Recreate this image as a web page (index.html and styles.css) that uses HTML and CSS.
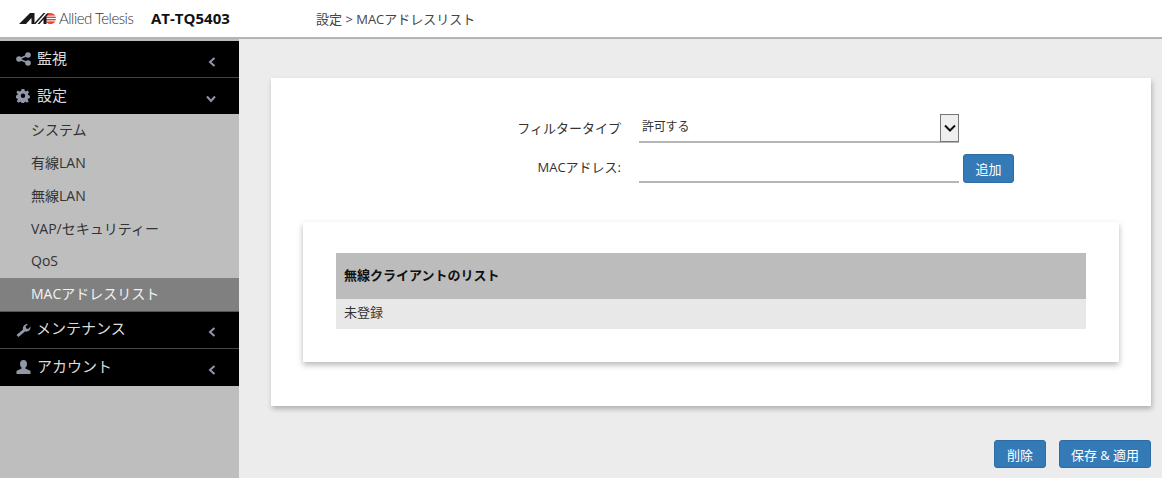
FILE: index.html
```html
<!DOCTYPE html>
<html>
<head>
  <meta charset="UTF-8">
  <link rel="stylesheet" href="styles.css">
</head>
<body>
  <div class="header">
    <div class="logo">
      <svg class="logo-mark" width="37" height="11" viewBox="0 0 37 11">
        <circle cx="31.500" cy="5.500" r="5.500" fill="#e8412c"/>
        <rect x="25" y="2.600" width="12" height="1" fill="#fff"/>
        <rect x="25" y="5" width="12" height="1" fill="#fff"/>
        <rect x="25" y="7.400" width="12" height="1" fill="#fff"/>
        <polygon points="0,11 11,0 15.500,0 15.500,11 12.500,11 12.500,5 7,11" fill="#1a1a1a"/>
        <polygon points="14.500,11 24.500,0 26.500,0 16.500,11" fill="#1a1a1a"/>
        <polygon points="18.500,11 28,0.500 30,0 27.500,3.500 27.500,11 24.500,11 24.500,6.500 20.500,11" fill="#1a1a1a"/>
      </svg>
      <span class="logo-text">Allied Telesis</span>
    </div>
    <div class="model">AT-TQ5403</div>
    <div class="crumb">設定 &gt; MACアドレスリスト</div>
  </div>
  <div class="main">
    <div class="sidebar">
      <div class="menu-item">
        <svg class="menu-icon" width="15" height="14" viewBox="0 0 15 14"><circle cx="3" cy="7" r="2.800"/><circle cx="12" cy="3" r="2.800"/><circle cx="12" cy="11" r="2.800"/><path d="M3 7 12 3M3 7l9 4" stroke="#8f97a8" stroke-width="1.500"/></svg>
        <span class="menu-label">監視</span>
        <svg class="chev" width="8" height="10" viewBox="0 0 8 10"><path d="M6.500 1 2 5l4.500 4"/></svg>
      </div>
      <div class="menu-item">
        <svg class="menu-icon" width="15" height="14" viewBox="0 0 15 14"><path d="M6 0h3l.4 2 1.300.6 1.800-1 1.600 2.200-1.400 1.400.2 1.300 2 .7v2.600l-2 .6-.3 1.300 1.200 1.500-2 1.700-1.500-1.200-1.200.4-.5 1.800H6l-.5-1.900-1.200-.4-1.600 1.200-2-1.700 1.200-1.500-.3-1.300-2-.6V7.200l2-.7.2-1.300L.4 3.800 2 1.600l1.800 1L5.600 2z" transform="scale(.93)"/><circle cx="7" cy="6.700" r="2.200" fill="#000"/></svg>
        <span class="menu-label">設定</span>
        <svg class="chev" width="10" height="8" viewBox="0 0 10 8"><path d="M1 1.500l4 4.500 4-4.500"/></svg>
      </div>
      <div class="sub-menu">
        <div class="sub-item">システム</div>
        <div class="sub-item">有線LAN</div>
        <div class="sub-item">無線LAN</div>
        <div class="sub-item">VAP/セキュリティー</div>
        <div class="sub-item">QoS</div>
        <div class="sub-item active">MACアドレスリスト</div>
      </div>
      <div class="menu-item">
        <svg class="menu-icon icon-tight" width="15" height="14" viewBox="0 0 15 14"><path d="M0.500 12 7 6.500C6.400 3.500 8.500.8 12 1L9.600 3.400 10.200 5.400 12.200 6 14.600 3.600C14.900 7 12 9.300 9 8.500L2.500 14Z"/></svg>
        <span class="menu-label">メンテナンス</span>
        <svg class="chev" width="8" height="10" viewBox="0 0 8 10"><path d="M6.500 1 2 5l4.500 4"/></svg>
      </div>
      <div class="menu-item">
        <svg class="menu-icon" width="15" height="14" viewBox="0 0 15 14"><path d="M7.500 0C10 0 11 2 11 4c0 2-1 3.200-1.800 4 0 1 3.300 1.500 5.300 3v3H.5v-3c2-1.500 5.300-2 5.300-3C5 7.200 4 6 4 4c0-2 1-4 3.500-4Z"/></svg>
        <span class="menu-label">アカウント</span>
        <svg class="chev" width="8" height="10" viewBox="0 0 8 10"><path d="M6.500 1 2 5l4.500 4"/></svg>
      </div>
    </div>
    <div class="content">
      <div class="card">
        <div class="form-row">
          <label class="form-label">フィルタータイプ</label>
          <div class="select-box">
            <span class="select-value">許可する</span>
            <span class="select-arrow">
              <svg width="12" height="8" viewBox="0 0 12 8"><path d="M1 1.500 6 6.500 11 1.500" fill="none" stroke="#111" stroke-width="2"/></svg>
            </span>
          </div>
        </div>
        <div class="form-row row-mac">
          <label class="form-label">MACアドレス:</label>
          <div class="text-input"></div>
          <button class="btn btn-add">追加</button>
        </div>
        <div class="list-card">
          <table class="client-table">
            <thead>
              <tr><th>無線クライアントのリスト</th></tr>
            </thead>
            <tbody>
              <tr><td>未登録</td></tr>
            </tbody>
          </table>
        </div>
      </div>
      <div class="actions">
        <button class="btn btn-delete">削除</button>
        <button class="btn btn-save">保存 &amp; 適用</button>
      </div>
    </div>
  </div>
</body>
</html>
```

FILE: styles.css
```css
* { box-sizing: border-box; }
html, body { height: 100%; }
body { margin: 0; overflow: hidden; background: #ececec; color: #333; font-family: "Open Sans", "Noto Sans CJK JP", sans-serif; font-size: 13px; }

.header { height: 39px; background: #fff; border-bottom: 2px solid #b5b5b5; display: flex; align-items: center; padding-left: 19px; padding-bottom: 1px; }
.logo { display: flex; align-items: center; width: 132px; }
.logo-mark { flex: none; }
.logo-text { margin-left: 3px; font-family: "Lato", sans-serif; font-weight: 300; font-size: 15px; letter-spacing: -.5px; color: #333; white-space: nowrap; }
.model { width: 165px; font-weight: 700; font-size: 15px; color: #111; }
.crumb { color: #444; font-size: 13px; }

.main { display: flex; height: 439px; }

.sidebar { width: 239px; flex: none; background: #bebebe; padding-top: 2px; }
.menu-item { height: 37px; background: #000; border-bottom: 1px solid #444; display: flex; align-items: center; padding: 0 23px 4px 16px; color: #dcdcdc; font-size: 15px; }
.menu-item:last-child { border-bottom: 0; }
.menu-icon { fill: #8f97a8; flex: none; margin: 4px 6px 0 0; }
.icon-tight { margin-right: 5px; }
.menu-label { flex: 1; }
.chev { flex: none; margin-top: 9px; }
.chev path { fill: none; stroke: #8f97a8; stroke-width: 2; }

.sub-menu { background: #bebebe; margin-top: -1px; }
.sub-item { height: 32.800px; display: flex; align-items: center; padding: 0 0 2px 31px; color: #333; font-size: 14px; }
.sub-item.active { background: #808080; color: #f2f2f2; border-bottom: 1px solid #555; height: 34px; padding-bottom: 3px; }

.content { flex: 1; padding: 39px 11px 0 32px; }
.card { height: 328px; background: #fff; box-shadow: 1px 3px 5px rgba(0, 0, 0, .25); padding: 36px 32px 0; }
.form-row { display: flex; align-items: flex-start; }
.form-label { width: 318px; padding-top: 4px; text-align: right; font-size: 13px; color: #333; flex: none; margin-right: 18px; }
.select-box { width: 320px; height: 29px; border-bottom: 2px solid #b5b5b5; display: flex; justify-content: space-between; padding: 3px 0 0 3px; font-size: 12px; }
.select-value { letter-spacing: -.2px; }
.select-arrow { width: 19px; height: 28px; margin-top: -3px; background: #efefef; border: 1px solid #767676; display: flex; align-items: center; justify-content: center; }
.row-mac { margin-top: 11px; }
.row-mac .form-label { padding-top: 3px; }
.text-input { width: 320px; height: 29px; border-bottom: 2px solid #b5b5b5; }

.btn { border: 1px solid #2e6da4; border-radius: 3px; background: #337ab7; color: #fff; font-family: inherit; font-size: 13px; padding: 0; height: 29px; }
.btn-add { width: 51px; margin-left: 4px; }

.list-card { margin-top: 39px; height: 140px; background: #fff; box-shadow: 0 3px 6px rgba(0, 0, 0, .28); padding: 31px 33px 0; }
.client-table { width: 100%; border-collapse: collapse; font-size: 13px; }
.client-table th { height: 46px; background: #bcbcbc; text-align: left; padding: 0 8px 4px; color: #111; font-weight: 700; }
.client-table td { height: 30px; background: #e8e8e8; padding: 0 8px 5px; }

.actions { display: flex; justify-content: flex-end; gap: 13px; margin-top: 34px; }
.btn-delete { width: 52px; height: 28px; }
.btn-save { width: 92px; height: 28px; }
```
